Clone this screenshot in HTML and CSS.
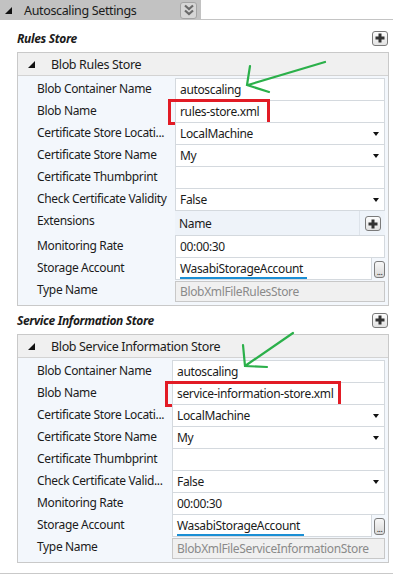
FILE: index.html
```html
<!DOCTYPE html>
<html lang="en">
<head>
  <meta charset="UTF-8" />
  <meta name="viewport" content="width=device-width, initial-scale=1" />
  <title>Autoscaling Settings</title>
  <link rel="stylesheet" href="styles.css">
</head>
<body>
  <div class="tab-bar">
    <div class="tab">
      <span class="tri"></span>
      <span class="tab-title">Autoscaling Settings</span>
      <span class="collapse-btn">
        <svg width="14" height="14" viewBox="0 0 14 14">
          <path d="M3 2.5 L7 6 L11 2.5" fill="none" stroke="#6a6a6a" stroke-width="2.2"/>
          <path d="M3 7.5 L7 11 L11 7.5" fill="none" stroke="#6a6a6a" stroke-width="2.2"/>
        </svg>
      </span>
    </div>
  </div>

  <!-- Rules store -->
  <section class="store">
    <div class="store-head">
      <h2>Rules Store</h2>
      <span class="add-btn"><svg width="10" height="10" viewBox="0 0 10 10"><path d="M5 0.5 V9.5 M0.5 5 H9.5" stroke="#333" stroke-width="3"/></svg></span>
    </div>
    <div class="panel">
      <div class="panel-head"><span class="tri"></span>Blob Rules Store</div>
      <div class="props">
        <div class="row"><div class="label">Blob Container Name</div><div class="value"><div class="box">autoscaling</div></div></div>
        <div class="row"><div class="label">Blob Name</div><div class="value"><div class="box marked marked-rules">rules-store.xml</div></div></div>
        <div class="row"><div class="label">Certificate Store Locati...</div><div class="value"><div class="box select">LocalMachine</div></div></div>
        <div class="row"><div class="label">Certificate Store Name</div><div class="value"><div class="box select">My</div></div></div>
        <div class="row"><div class="label">Certificate Thumbprint</div><div class="value"><div class="box"></div></div></div>
        <div class="row"><div class="label">Check Certificate Validity</div><div class="value"><div class="box select">False</div></div></div>
        <div class="row row-ext">
          <div class="label">Extensions</div>
          <div class="value">
            <div class="ext-grid">
              <span class="ext-name">Name</span>
              <span class="ext-add"><span class="add-btn"><svg width="10" height="10" viewBox="0 0 10 10"><path d="M5 0.5 V9.5 M0.5 5 H9.5" stroke="#333" stroke-width="3"/></svg></span></span>
            </div>
          </div>
        </div>
        <div class="row"><div class="label">Monitoring Rate</div><div class="value"><div class="box">00:00:30</div></div></div>
        <div class="row"><div class="label">Storage Account</div><div class="value account"><div class="box"><span class="underlined">WasabiStorageAccount</span></div><span class="dots-btn">...</span></div></div>
        <div class="row"><div class="label">Type Name</div><div class="value"><div class="box disabled">BlobXmlFileRulesStore</div></div></div>
      </div>
      <svg class="arrow arrow-rules" width="90" height="40" viewBox="0 0 90 40">
        <path d="M86 3 L9 26 M11 7 L8 26 L30 33" fill="none" stroke="#2bb04a" stroke-width="2.2" stroke-linecap="round"/>
      </svg>
    </div>
  </section>

  <!-- Service information store -->
  <section class="store">
    <div class="store-head">
      <h2>Service Information Store</h2>
      <span class="add-btn"><svg width="10" height="10" viewBox="0 0 10 10"><path d="M5 0.5 V9.5 M0.5 5 H9.5" stroke="#333" stroke-width="3"/></svg></span>
    </div>
    <div class="panel narrow">
      <div class="panel-head"><span class="tri"></span>Blob Service Information Store</div>
      <div class="props">
        <div class="row"><div class="label">Blob Container Name</div><div class="value"><div class="box">autoscaling</div></div></div>
        <div class="row"><div class="label">Blob Name</div><div class="value"><div class="box marked marked-service">service-information-store.xml</div></div></div>
        <div class="row"><div class="label">Certificate Store Locati...</div><div class="value"><div class="box select">LocalMachine</div></div></div>
        <div class="row"><div class="label">Certificate Store Name</div><div class="value"><div class="box select">My</div></div></div>
        <div class="row"><div class="label">Certificate Thumbprint</div><div class="value"><div class="box"></div></div></div>
        <div class="row"><div class="label">Check Certificate Valid...</div><div class="value"><div class="box select">False</div></div></div>
        <div class="row"><div class="label">Monitoring Rate</div><div class="value"><div class="box">00:00:30</div></div></div>
        <div class="row"><div class="label">Storage Account</div><div class="value account"><div class="box"><span class="underlined">WasabiStorageAccount</span></div><span class="dots-btn">...</span></div></div>
        <div class="row"><div class="label">Type Name</div><div class="value"><div class="box disabled">BlobXmlFileServiceInformationStore</div></div></div>
      </div>
      <svg class="arrow arrow-service" width="60" height="40" viewBox="0 0 60 40">
        <path d="M55 2 L7 35 M5 14 L7 35 L29 36" fill="none" stroke="#2bb04a" stroke-width="2.2" stroke-linecap="round"/>
      </svg>
    </div>
  </section>

  <div class="bottom-line"></div>
</body>
</html>
```

FILE: styles.css
```css
body {
  margin: 0;
  background: #fff;
  color: #1b1b1b;
  font-family: "Noto Sans", "Open Sans", sans-serif;
  font-size: 12px;
  letter-spacing: -0.35px;
  width: 393px;
  overflow: hidden;
}

/* Top tab */
.tab-bar {
  height: 20px;
  border-bottom: 1px solid #c4c4c4;
  box-sizing: border-box;
}

.tab {
  width: 201px;
  height: 20px;
  background: #c2c2c2;
  display: flex;
  align-items: center;
}

.tri {
  display: inline-block;
  width: 0;
  height: 0;
  border-left: 7px solid transparent;
  border-bottom: 7px solid #111;
}

.tab .tri {
  margin: 0 12px 0 5px;
}

.tab-title {
  font-size: 12.5px;
  flex: 1;
}

.collapse-btn {
  width: 15px;
  height: 15px;
  margin-right: 4px;
  border: 1px solid #a4a4a4;
  border-radius: 3px;
  background: #d6d6d6;
  display: flex;
  align-items: center;
  justify-content: center;
}

/* Store sections */
.store-head {
  height: 28px;
  margin-top: 4px;
  padding: 0 5px 0 17px;
  display: flex;
  align-items: center;
  justify-content: space-between;
}

.store + .store .store-head {
  margin-top: 0;
}

.store-head h2 {
  margin: 0;
  font-size: 12px;
  font-weight: 700;
  font-style: italic;
}

.add-btn {
  width: 14px;
  height: 13px;
  border: 1px solid #7a7a7a;
  border-radius: 3px;
  background: linear-gradient(#fdfdfd, #e2e2e2);
  display: flex;
  align-items: center;
  justify-content: center;
}

/* Property panel */
.panel {
  position: relative;
  margin: 0 4px 0 17px;
  border: 1px solid #c9c9c9;
  background: #f3f7fc;
}

.panel-head {
  height: 22px;
  background: #f0f0f0;
  border-bottom: 1px solid #d3d3d3;
  display: flex;
  align-items: center;
  font-size: 12.5px;
}

.panel-head .tri {
  margin: 0 16px 0 10px;
}

.props {
  padding: 3px 0 3px;
}

.row {
  display: grid;
  grid-template-columns: 157px 1fr;
  height: 22px;
}

.narrow .row {
  grid-template-columns: 154px 1fr;
}

.row-ext {
  height: 25px;
}

.label {
  padding-left: 19px;
  line-height: 19px;
  white-space: nowrap;
  overflow: hidden;
}

.value {
  padding-right: 3px;
}

.box {
  position: relative;
  height: 23px;
  box-sizing: border-box;
  border: 1px solid #d4d9de;
  margin-top: -1px;
  background: #fff;
  padding-left: 4px;
  line-height: 21px;
  white-space: nowrap;
}

.select::after {
  content: "";
  position: absolute;
  right: 5px;
  top: 9px;
  border-left: 3.5px solid transparent;
  border-right: 3.5px solid transparent;
  border-top: 4px solid #111;
}

.disabled {
  background: #f0f0f0;
  border-color: #c8c8c8;
  color: #8a8a8a;
  margin-top: 1px;
  height: 21px;
  line-height: 19px;
}

.ext-grid {
  height: 25px;
  display: grid;
  grid-template-columns: 1fr 26px;
  background: #eef3f9;
}

.ext-name {
  padding-left: 4px;
  line-height: 25px;
}

.ext-add {
  border-left: 1px solid #dde3ea;
  display: flex;
  align-items: center;
  justify-content: center;
}

.account {
  display: flex;
  align-items: center;
  gap: 2px;
}

.account .box {
  flex: 1;
}

.underlined {
  display: inline-block;
  line-height: 17px;
  padding-right: 4px;
  border-bottom: 2px solid #1b8fd5;
}

.dots-btn {
  width: 11px;
  height: 17px;
  box-sizing: border-box;
  border: 1px solid #7c7c7c;
  border-radius: 3px;
  background: linear-gradient(#f7f7f7, #d9d9d9);
  display: flex;
  align-items: flex-end;
  justify-content: center;
  font-size: 9px;
  line-height: 1;
  padding-bottom: 1px;
  letter-spacing: -0.5px;
  color: #222;
}

/* Annotations drawn over the screenshot */
.marked::before {
  content: "";
  position: absolute;
  top: -2px;
  left: -8px;
  height: 20px;
  border: 3px solid #e21b25;
}

.marked-rules::before {
  width: 96px;
}

.marked-service::before {
  width: 170px;
}

.arrow {
  position: absolute;
}

.arrow-rules {
  left: 221px;
  top: 6px;
}

.arrow-service {
  left: 220px;
  top: -4px;
}

.bottom-line {
  margin-top: 10px;
  border-top: 1px solid #c9c9c9;
}
```
